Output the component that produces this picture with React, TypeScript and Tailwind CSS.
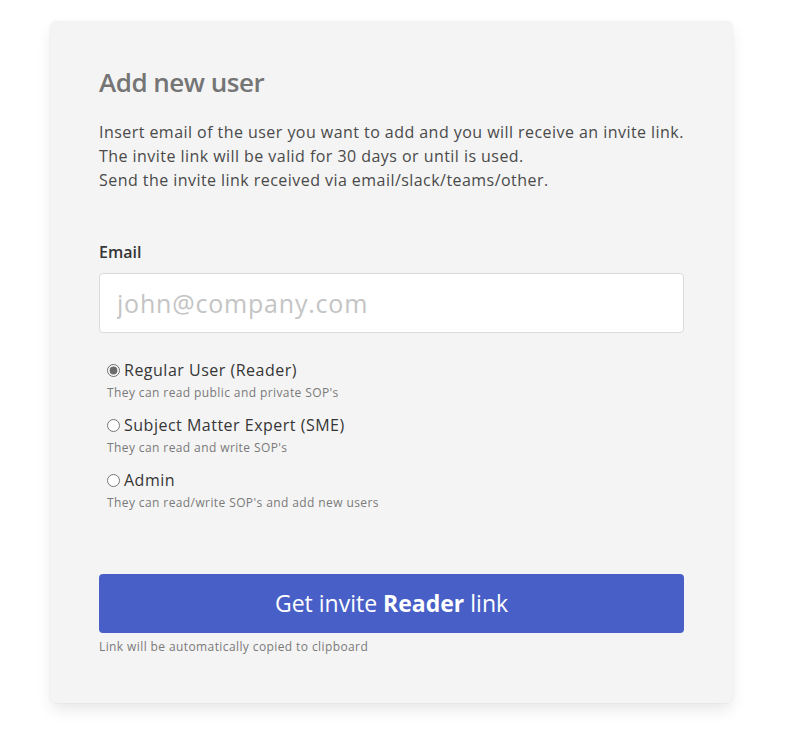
import { useState } from 'react';

const ROLES = [
  { id: 'reader', label: 'Regular User (Reader)', hint: "They can read public and private SOP's", name: 'Reader' },
  { id: 'sme', label: 'Subject Matter Expert (SME)', hint: "They can read and write SOP's", name: 'SME' },
  { id: 'admin', label: 'Admin', hint: "They can read/write SOP's and add new users", name: 'Admin' },
];

export default function App() {
  const [role, setRole] = useState('reader');
  const current = ROLES.find((r) => r.id === role)!;

  return (
    <div className="min-h-[733px] bg-white pt-[21px] font-['Open_Sans',sans-serif]">
      <div className="ml-[50px] w-[683px] rounded-md bg-[#f4f4f4] px-[49px] pt-[45px] pb-[47px] shadow-[0_8px_16px_-2px_rgba(10,10,10,0.1),0_0_0_1px_rgba(10,10,10,0.02)]">
        <h1 className="text-[26px] leading-[32px] font-semibold tracking-[-0.5px] text-[#757575]">Add new user</h1>

        <p className="mt-[22px] text-[16px] leading-[24px] tracking-[0.45px] text-[#4a4a4a]">
          Insert email of the user you want to add and you will receive an invite link.
          <br />
          The invite link will be valid for 30 days or until is used.
          <br />
          Send the invite link received via email/slack/teams/other.
        </p>

        {/* Email */}
        <label className="mt-[48px] block text-[16px] leading-[24px] font-semibold text-[#363636]">Email</label>
        <input
          type="email"
          placeholder="john@company.com"
          className="mt-[9px] block h-[60px] w-full rounded-[4px] border border-[#dbdbdb] bg-white px-[17px] text-[25px] tracking-[0.8px] text-[#363636] outline-none placeholder:text-[#c4c4c4]"
        />

        {/* Roles */}
        <div className="mt-[26px] ml-[8px] flex flex-col gap-[10px]">
          {ROLES.map((r) => (
            <label key={r.id} className="block cursor-pointer">
              <div className="flex items-center gap-[4px] text-[16px] leading-[22px] tracking-[0.5px] text-[#363636]">
                <input
                  type="radio"
                  name="role"
                  checked={role === r.id}
                  onChange={() => setRole(r.id)}
                  className="m-0 h-[13px] w-[13px] accent-[#6b6b6b]"
                />
                {r.label}
              </div>
              <div className="mt-[1px] text-[12px] leading-[22px] tracking-[0.4px] text-[#7a7a7a]">{r.hint}</div>
            </label>
          ))}
        </div>

        {/* Button */}
        <button className="mt-[60px] flex h-[59px] w-full items-center justify-center rounded-[4px] bg-[#485fc7] text-[23px] text-white">
          Get invite&nbsp;<span className="font-bold">{current.name}</span>&nbsp;link
        </button>
        <p className="mt-[5px] text-[12px] leading-[18px] tracking-[0.4px] text-[#7a7a7a]">Link will be automatically copied to clipboard</p>
      </div>
    </div>
  );
}
